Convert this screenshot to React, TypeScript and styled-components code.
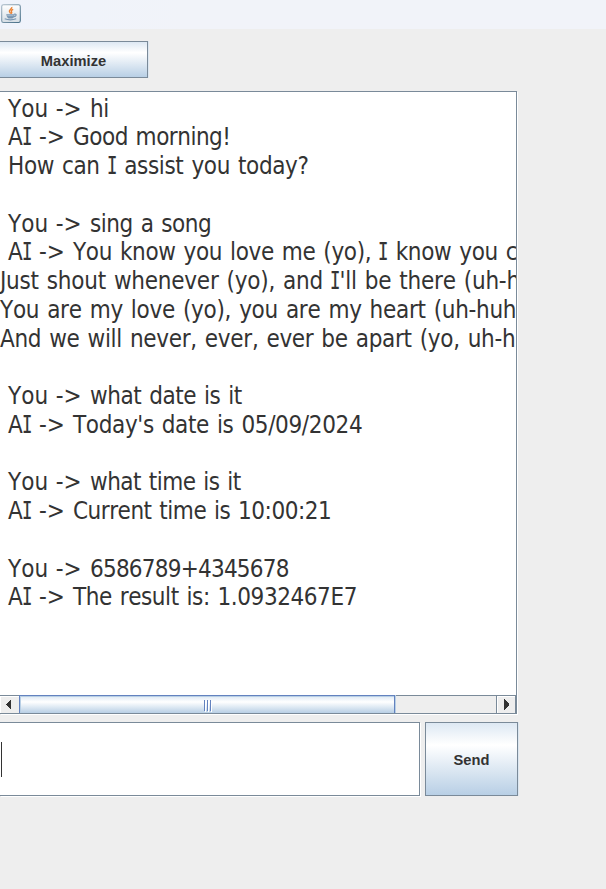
import React from "react";
import styled, { createGlobalStyle } from "styled-components";

const GlobalStyle = createGlobalStyle`
  * { box-sizing: border-box; }
  body { margin: 0; background: #eeeeee; }
`;

const Frame = styled.div`
  width: 606px;
  height: 889px;
  overflow: hidden;
  background: #eeeeee;
  color: #333333;
  font-family: "Liberation Sans", Arial, sans-serif;
`;

const TitleBar = styled.header`
  height: 29px;
  padding: 4px 0 0 1px;
  background: linear-gradient(90deg, #eff3fb, #f1f3f9 30%);
  svg { display: block; }
`;

const Content = styled.main`
  display: flex;
  flex-direction: column;
  width: 519px;
  padding-top: 12px;
`;

const MetalButton = styled.button<{ $width: number; $height: number; $flush?: boolean }>`
  width: ${(p) => p.$width}px;
  height: ${(p) => p.$height}px;
  padding: 2px 0 0;
  border: 1px solid #7a8a99;
  border-left-width: ${(p) => (p.$flush ? 0 : 1)}px;
  border-radius: 0;
  background: linear-gradient(#dde8f3 0%, #ffffff 30%, #ffffff 31%, #b8cfe5 100%);
  box-shadow: 1px 0 0 #dce7f1;
  color: #333333;
  font: bold 14.7px "Liberation Sans", Arial, sans-serif;
  text-align: center;
`;

const ScrollPane = styled.section`
  display: flex;
  flex-direction: column;
  width: 517px;
  height: 623px;
  margin-top: 13px;
  border: 1px solid #7a8a99;
  border-left: 0;
  box-shadow: 1px 1px 0 #ffffff;
  background: #ffffff;
`;

const Transcript = styled.div`
  flex: 1;
  padding-top: 2.6px;
  overflow: hidden;
  font-family: "DejaVu Sans Condensed", "DejaVu Sans", sans-serif;
  font-stretch: condensed;
  font-kerning: none;
  font-size: 24px;
  line-height: 28.76px;
`;

const Line = styled.div<{ $indent: number; $spacing: number }>`
  display: flex;
  height: 28.76px;
  padding-left: ${(p) => p.$indent}px;
  letter-spacing: ${(p) => p.$spacing}px;
  word-spacing: 1.4px;
  white-space: pre;
`;

const Speaker = styled.span<{ $width: number }>`
  flex: none;
  width: ${(p) => p.$width}px;
  letter-spacing: 0;
  word-spacing: 0.8px;
`;

const SerifI = styled.span`
  display: inline-block;
  width: 14.4px;
  margin: 0 -2.9px;
  font-family: "DejaVu Sans Mono", monospace;
  letter-spacing: 0;
  line-height: 1;
  transform: scaleX(0.72);
  -webkit-text-stroke: 0.2px #333333;
`;

const ScrollBar = styled.div`
  display: flex;
  height: 18px;
  border-top: 1px solid #7a8a99;
  background: #eeeeee;
`;

const ArrowButton = styled.div<{ $side: "left" | "right" }>`
  display: flex;
  align-items: center;
  width: ${(p) => (p.$side === "left" ? 19 : 20)}px;
  padding-left: ${(p) => (p.$side === "left" ? 6 : 7)}px;
  border-left: ${(p) => (p.$side === "right" ? "1px solid #7a8a99" : "0")};
  border-right: ${(p) => (p.$side === "right" ? "1px solid #7a8a99" : "0")};
  box-shadow: inset 1px 1px 0 #ffffff;
`;

const Thumb = styled.div`
  display: flex;
  justify-content: center;
  align-items: center;
  gap: 2px;
  width: 376px;
  height: 18px;
  margin-top: -1px;
  border: solid #6382bf;
  border-width: 1px 1px 0;
  box-shadow: inset 1px 1px 0 #b8cfe5, 1px 0 0 #b8cfe5;
  background: linear-gradient(#dde8f3, #ffffff 35%, #b8cfe5);
`;

const Grip = styled.i`
  width: 1px;
  height: 11px;
  margin-top: 1px;
  background: #6382bf;
  box-shadow: 1px 1px 0 #ffffff;
`;

const Track = styled.div`
  flex: 1;
`;

const InputRow = styled.div`
  display: flex;
  gap: 5px;
  margin-top: 8px;
`;

const MessageField = styled.div`
  display: flex;
  align-items: center;
  width: 420px;
  height: 74px;
  padding-left: 1px;
  border: 1px solid #7a8a99;
  border-left: 0;
  box-shadow: 1px 1px 0 #ffffff;
  background: #ffffff;
`;

const Caret = styled.i`
  width: 1px;
  height: 35px;
  background: #333333;
`;

type ChatLine = { who?: "You" | "AI"; text: string; indent?: number; spacing?: number };

const speakerWidth = { You: 82, AI: 65 };

const lines: ChatLine[] = [
  { who: "You", text: "hi" },
  { who: "AI", text: "Good morning!", spacing: -0.5 },
  { text: "How can I assist you today?" },
  { text: "" },
  { who: "You", text: "sing a song", spacing: -0.45 },
  { who: "AI", text: "You know you love me (yo), I know you care (uh-huh)" },
  { text: "Just shout whenever (yo), and I'll be there (uh-huh)", indent: 0, spacing: -0.24 },
  { text: "You are my love (yo), you are my heart (uh-huh)", indent: 0, spacing: -0.29 },
  { text: "And we will never, ever, ever be apart (yo, uh-huh)", indent: 0, spacing: -0.3 },
  { text: "" },
  { who: "You", text: "what date is it", spacing: -0.42 },
  { who: "AI", text: "Today's date is 05/09/2024" },
  { text: "" },
  { who: "You", text: "what time is it", spacing: -0.5 },
  { who: "AI", text: "Current time is 10:00:21", spacing: -0.48 },
  { text: "" },
  { who: "You", text: "6586789+4345678", spacing: -0.78 },
  { who: "AI", text: "The result is: 1.0932467E7", spacing: -0.43 },
];

function withSerifI(text: string) {
  return text.split(/(I)/).map((part, i) => (part === "I" ? <SerifI key={i}>I</SerifI> : part));
}

function JavaIcon() {
  return (
    <svg width="20" height="20" viewBox="0 0 20 20">
      <defs>
        <linearGradient id="tile" x1="0" y1="0" x2="0" y2="1">
          <stop offset="0" stopColor="#ffffff" />
          <stop offset="1" stopColor="#d5dde4" />
        </linearGradient>
        <linearGradient id="rim" x1="0" y1="0" x2="1" y2="1">
          <stop offset="0" stopColor="#a9b9c6" />
          <stop offset="1" stopColor="#456e87" />
        </linearGradient>
      </defs>
      <rect x=".7" y=".7" width="18.6" height="17.8" rx="1.8" fill="url(#tile)" stroke="url(#rim)" strokeWidth="1.1" />
      <path d="M10.8 3c.6 1.8-3.1 2.8-2.4 4.6.3.8 1.2 1.4 1.4 2M12.2 5.3c-1.3.5-2.4 1.3-1.7 2.4.5.8.3 1.4-.3 2" fill="none" stroke="#ec8334" strokeWidth="1.4" />
      <path d="M5.2 10.2h8.2v1.6q-.6 2.2-2 2.7H7.5q-1.7-.8-2.3-4.3z" fill="#7895b1" />
      <path d="M13 10.3c3-.8 3 2-.7 2.7M3.7 14.8q5.8 2.1 11.5-.1" fill="none" stroke="#7895b1" strokeWidth="1.1" />
      <path d="M6.2 11.7h6.4" stroke="#c1cfdd" strokeWidth=".7" />
    </svg>
  );
}

export default function App() {
  return (
    <Frame>
      <GlobalStyle />
      <TitleBar><JavaIcon /></TitleBar>
      <Content>
        <MetalButton $width={148} $height={37} $flush>Maximize</MetalButton>
        <ScrollPane>
          <Transcript>
            {lines.map((l, i) => (
              <Line key={i} $indent={l.indent ?? 8} $spacing={l.spacing ?? -0.35}>
                {l.who && <Speaker $width={speakerWidth[l.who]}>{withSerifI(l.who + " ->")}</Speaker>}
                <span>{withSerifI(l.text)}</span>
              </Line>
            ))}
          </Transcript>
          <ScrollBar>
            <ArrowButton $side="left">
              <svg width="5" height="11" viewBox="0 0 5 11" shapeRendering="crispEdges"><path d="M5 0v11L0 6V5z" fill="#333" /></svg>
            </ArrowButton>
            <Thumb><Grip /><Grip /><Grip /></Thumb>
            <Track />
            <ArrowButton $side="right">
              <svg width="5" height="11" viewBox="0 0 5 11" shapeRendering="crispEdges"><path d="M0 0v11L5 6V5z" fill="#333" /></svg>
            </ArrowButton>
          </ScrollBar>
        </ScrollPane>
        <InputRow>
          <MessageField><Caret /></MessageField>
          <MetalButton $width={93} $height={74}>Send</MetalButton>
        </InputRow>
      </Content>
    </Frame>
  );
}
